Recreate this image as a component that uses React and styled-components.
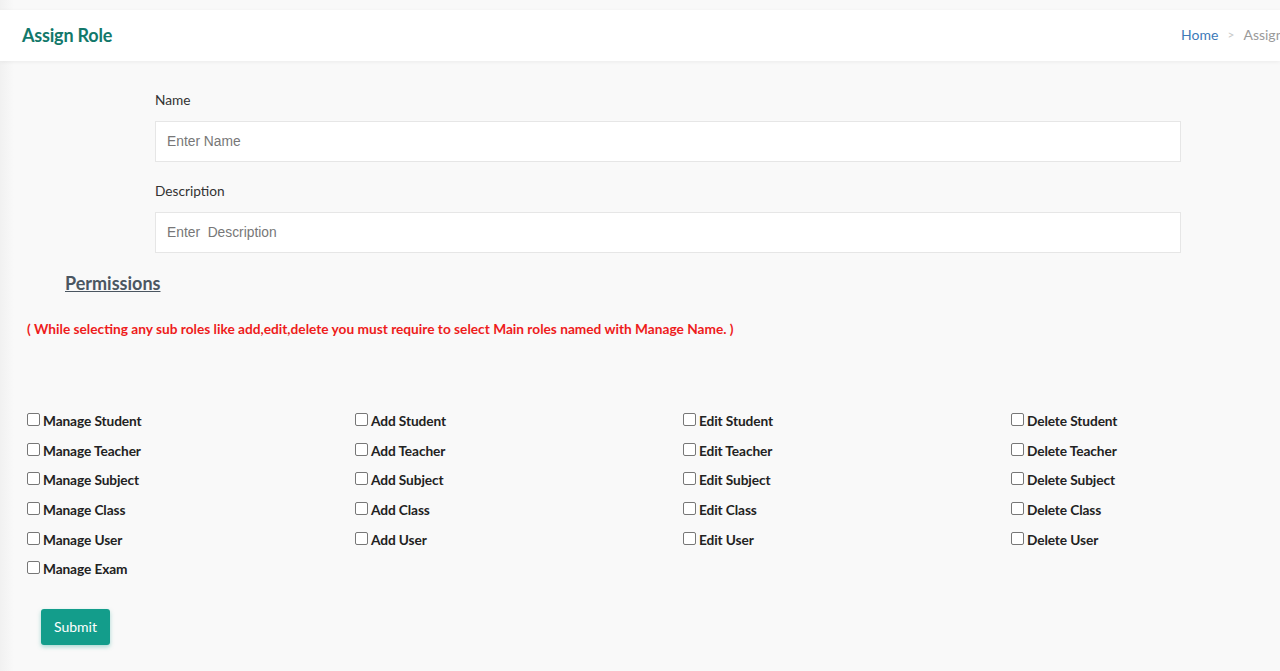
import styled, { createGlobalStyle } from 'styled-components';

const GlobalStyle = createGlobalStyle`
  html, body {
    margin: 0;
    padding: 0;
    background: #f9f9f9;
    overflow-x: hidden;
    font-family: Lato, "Noto Sans", sans-serif;
  }
`;

const PERMISSIONS = [
  ['Manage Student', 'Add Student', 'Edit Student', 'Delete Student'],
  ['Manage Teacher', 'Add Teacher', 'Edit Teacher', 'Delete Teacher'],
  ['Manage Subject', 'Add Subject', 'Edit Subject', 'Delete Subject'],
  ['Manage Class', 'Add Class', 'Edit Class', 'Delete Class'],
  ['Manage User', 'Add User', 'Edit User', 'Delete User'],
  ['Manage Exam'],
];

const App = () => {
  return (
    <Page>
      <GlobalStyle />
      <Header>
        <Title>Assign Role</Title>
        <Breadcrumb>
          <Crumb href="#">Home</Crumb>
          <Sep>&gt;</Sep>
          <Current>Assign Role</Current>
        </Breadcrumb>
      </Header>

      <Form onSubmit={(e) => e.preventDefault()}>
        <Fields>
          <Field>
            <Label>Name</Label>
            <Input placeholder="Enter Name" />
          </Field>
          <Field>
            <Label>Description</Label>
            <Input placeholder="Enter  Description" />
          </Field>
        </Fields>

        <SectionTitle>Permissions</SectionTitle>
        <Note>( While selecting any sub roles like add,edit,delete you must require to select Main roles named with Manage Name. )</Note>

        <Grid>
          {PERMISSIONS.map((row) =>
            [0, 1, 2, 3].map((i) =>
              row[i] ? (
                <Check key={row[i]}>
                  <Box type="checkbox" />
                  {row[i]}
                </Check>
              ) : (
                <span key={row[0] + i} />
              )
            )
          )}
        </Grid>

        <Submit type="submit">Submit</Submit>
      </Form>
    </Page>
  );
};

const Page = styled.div`
  min-height: 671px;
  padding-top: 10px;
  box-sizing: border-box;
  background: linear-gradient(90deg, #f1f1f1 0, #f9f9f9 14px);
`;

const Header = styled.div`
  height: 51px;
  background: #fff;
  display: flex;
  align-items: center;
  justify-content: space-between;
  padding: 0 0 0 22px;
  box-shadow: 0 1px 4px rgba(0, 0, 0, 0.06);
`;

const Title = styled.h1`
  margin: 0 0 2px;
  font-size: 18px;
  font-weight: 700;
  color: #12786a;
  letter-spacing: -0.2px;
`;

const Breadcrumb = styled.div`
  display: flex;
  align-items: center;
  gap: 9px;
  font-size: 14px;
  margin: 0 -34px 2px 0;
  white-space: nowrap;
`;

const Crumb = styled.a`
  color: #3d7ab8;
  text-decoration: none;
`;

const Sep = styled.span`
  color: #c8c8c8;
  font-size: 12px;
`;

const Current = styled.span`
  color: #9a9a9a;
`;

const Form = styled.form`
  padding: 30px 0 0 27px;
`;

const Fields = styled.div`
  padding-left: 128px;
  width: 1026px;
  display: flex;
  flex-direction: column;
  gap: 20px;
`;

const Field = styled.div`
  display: flex;
  flex-direction: column;
`;

const Label = styled.label`
  font-size: 13.7px;
  color: #333;
  margin-bottom: 12px;
  line-height: 18px;
`;

const Input = styled.input`
  height: 41px;
  box-sizing: border-box;
  border: 1px solid #e6e6e6;
  background: #fff;
  padding: 0 11px;
  font-family: "Liberation Sans", Arial, sans-serif;
  font-size: 13.8px;
  color: #333;
  outline: none;

  &::placeholder {
    color: #777;
  }
`;

const SectionTitle = styled.h2`
  margin: 19px 0 0 38px;
  font-size: 18px;
  font-weight: 700;
  color: #4b5661;
  text-decoration: underline;
  line-height: 22px;
`;

const Note = styled.p`
  margin: 27px 0 0;
  font-size: 13.7px;
  font-weight: 700;
  color: #ee1c1c;
  line-height: 16px;
`;

const Grid = styled.div`
  margin-top: 69px;
  display: grid;
  grid-template-columns: repeat(4, 328px);
  grid-auto-rows: 29.6px;
`;

const Check = styled.label`
  display: flex;
  align-items: center;
  font-size: 13.7px;
  font-weight: 700;
  color: #222;
  letter-spacing: -0.1px;
`;

const Box = styled.input`
  appearance: none;
  width: 13px;
  height: 13px;
  margin: 0 3px 2px 0;
  border: 1px solid #777;
  border-radius: 2px;
  background: #fff;
  box-sizing: border-box;
  flex-shrink: 0;

  &:checked {
    background: #0f7ad8;
    border-color: #0f7ad8;
  }
`;

const Submit = styled.button`
  margin: 25px 0 0 14px;
  width: 69px;
  height: 36px;
  border: none;
  border-radius: 3px;
  background: #139d8b;
  color: #fff;
  font-family: Lato, sans-serif;
  font-size: 14px;
  box-shadow: 0 2px 4px rgba(19, 157, 139, 0.35);
  cursor: pointer;
`;

export default App;
